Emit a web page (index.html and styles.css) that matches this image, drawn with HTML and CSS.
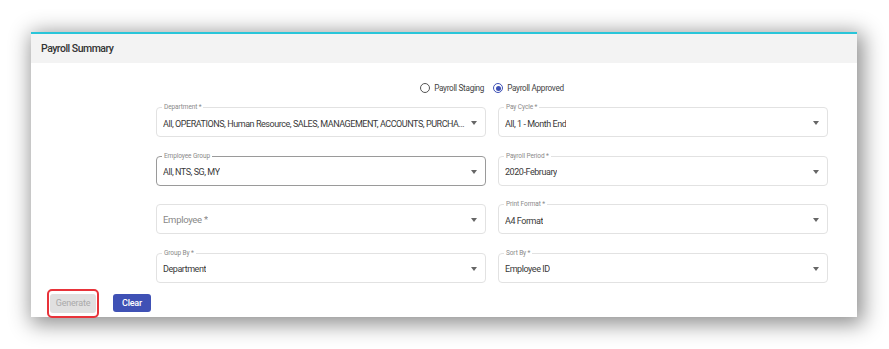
FILE: index.html
```html
<!DOCTYPE html>
<html lang="en">
  <head>
    <meta charset="UTF-8" >
    <meta name="viewport" content="width=device-width, initial-scale=1.0" >
    <title>Payroll Summary</title>
    <link rel="stylesheet" href="styles.css">
  </head>
  <body>
    <div class="panel">
      <div class="panel-head">Payroll Summary</div>

      <div class="panel-body">
        <div class="radio-row">
          <label class="radio">
            <span class="radio-dot"></span>
            Payroll Staging
          </label>
          <label class="radio">
            <span class="radio-dot checked"></span>
            Payroll Approved
          </label>
        </div>

        <div class="form-grid">
          <div class="field">
            <span class="field-label">Department *</span>
            <span class="field-value">All, OPERATIONS, Human Resource, SALES, MANAGEMENT, ACCOUNTS, PURCHASE, FINANCE</span>
            <span class="caret"></span>
          </div>
          <div class="field">
            <span class="field-label">Pay Cycle *</span>
            <span class="field-value">All, 1 - Month End</span>
            <span class="caret"></span>
          </div>
          <div class="field active">
            <span class="field-label">Employee Group</span>
            <span class="field-value">All, NTS, SG, MY</span>
            <span class="caret"></span>
          </div>
          <div class="field">
            <span class="field-label">Payroll Period *</span>
            <span class="field-value">2020-February</span>
            <span class="caret"></span>
          </div>
          <div class="field">
            <span class="field-value placeholder">Employee *</span>
            <span class="caret"></span>
          </div>
          <div class="field">
            <span class="field-label">Print Format *</span>
            <span class="field-value">A4 Format</span>
            <span class="caret"></span>
          </div>
          <div class="field">
            <span class="field-label">Group By *</span>
            <span class="field-value">Department</span>
            <span class="caret"></span>
          </div>
          <div class="field">
            <span class="field-label">Sort By *</span>
            <span class="field-value">Employee ID</span>
            <span class="caret"></span>
          </div>
        </div>
      </div>

      <div class="button-row">
        <span class="highlight">
          <button type="button" class="btn btn-disabled" disabled>Generate</button>
        </span>
        <button type="button" class="btn btn-primary">Clear</button>
      </div>
    </div>
  </body>
</html>
```

FILE: styles.css
```css
html,
body {
  min-height: 100%;
}

body {
  margin: 0;
  padding: 32px 0 32px 31px;
  background: #fff;
  font-family: Roboto, "Noto Sans", sans-serif;
  color: #333;
}

.panel {
  width: 826px;
  height: 285px;
  background: #fff;
  box-shadow: 3px 4px 20px 3px rgba(0, 0, 0, 0.45);
}

.panel-head {
  height: 29px;
  line-height: 29px;
  border-top: 2px solid #29c5d9;
  background: #f3f3f3;
  padding-left: 10px;
  font-size: 10.5px;
  font-weight: 500;
  letter-spacing: -0.5px;
  color: #333;
}

.panel-body {
  padding: 17px 29px 0 125px;
}

.radio-row {
  display: flex;
  justify-content: center;
  gap: 9px;
  height: 16px;
  align-items: center;
}

.radio {
  display: flex;
  align-items: center;
  gap: 4px;
  font-size: 8.2px;
  letter-spacing: -0.3px;
  color: #444;
}

.radio-dot {
  width: 8px;
  height: 8px;
  border: 1.5px solid #555;
  border-radius: 50%;
  display: inline-flex;
  align-items: center;
  justify-content: center;
}

.radio-dot.checked {
  border-color: #3f51b5;
}

.radio-dot.checked::after {
  content: "";
  width: 5px;
  height: 5px;
  border-radius: 50%;
  background: #3f51b5;
}

.form-grid {
  margin-top: 11px;
  display: grid;
  grid-template-columns: 330px 330px;
  column-gap: 12px;
  row-gap: 18.5px;
}

.field {
  position: relative;
  height: 30px;
  box-sizing: border-box;
  border: 1px solid #e2e2e2;
  border-radius: 4px;
  display: flex;
  align-items: center;
  padding: 0 17px 0 6px;
}

.field.active {
  border-color: #9a9a9a;
}

.field-label {
  position: absolute;
  top: -5px;
  left: 5px;
  padding: 0 2px;
  background: #fff;
  font-size: 6.5px;
  line-height: 9px;
  letter-spacing: -0.1px;
  color: #8a8a8a;
}

.field-value {
  font-size: 9px;
  letter-spacing: -0.45px;
  color: #3a3a3a;
  white-space: nowrap;
  overflow: hidden;
  text-overflow: ellipsis;
  padding-top: 3px;
}

.field-value.placeholder {
  color: #888;
  font-size: 9.5px;
  letter-spacing: -0.3px;
  padding-top: 0;
}

.caret {
  position: absolute;
  right: 8px;
  top: 13px;
  border-left: 3.5px solid transparent;
  border-right: 3.5px solid transparent;
  border-top: 4px solid #666;
}

.button-row {
  display: flex;
  align-items: center;
  gap: 14px;
  padding-left: 16px;
  margin-top: 6px;
}

.highlight {
  display: inline-flex;
  padding: 3px 1px;
  border: 2px solid #e8333a;
  border-radius: 5px;
}

.btn {
  border: none;
  border-radius: 3px;
  font-family: inherit;
  font-size: 9px;
  letter-spacing: -0.2px;
  height: 19px;
  padding: 0;
  cursor: pointer;
}

.btn-disabled {
  width: 46px;
  background: #e0e0e0;
  color: #aaa;
  cursor: default;
}

.btn-primary {
  width: 38px;
  height: 18px;
  background: #3f51b5;
  color: #fff;
  font-weight: 500;
}
```
